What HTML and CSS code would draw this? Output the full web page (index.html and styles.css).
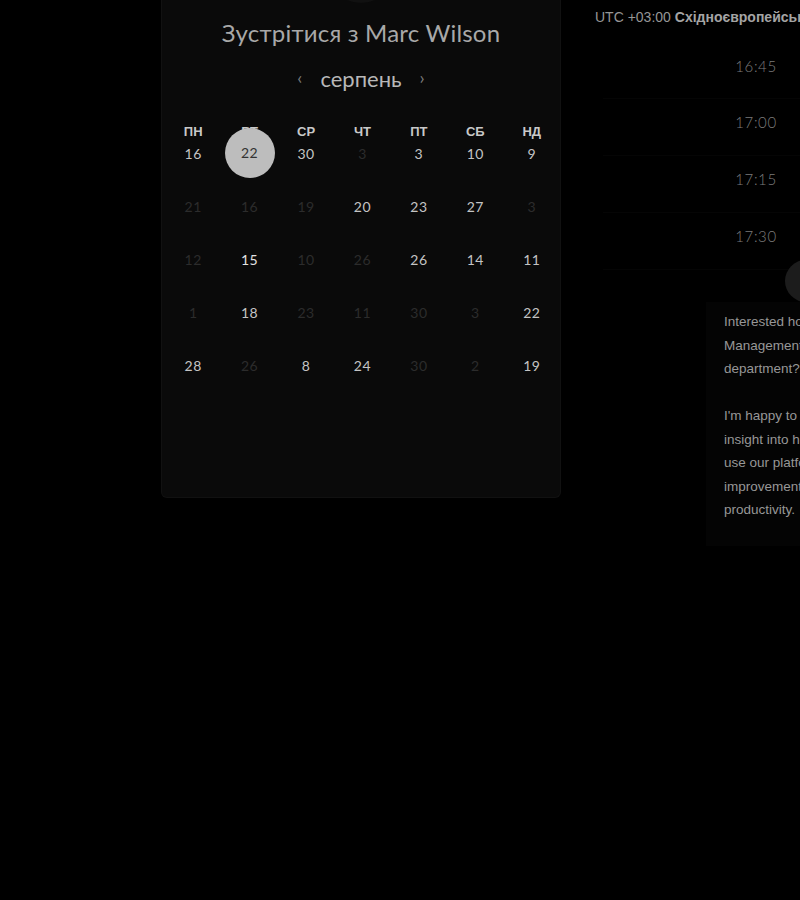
FILE: index.html
```html
<!DOCTYPE html>
<html lang="uk">
  <head>
    <meta charset="UTF-8" />
    <meta name="viewport" content="width=device-width, initial-scale=1.0" />
    <title>Зустрітися з Marc Wilson</title>
    <link rel="stylesheet" href="styles.css">
  </head>
  <body>
    <div class="page">
      <div class="card">
        <div class="avatar"></div>
        <h1 class="title">Зустрітися з Marc Wilson</h1>
        <div class="month-nav">
          <span class="arrow">&#8249;</span>
          <span class="month">серпень</span>
          <span class="arrow">&#8250;</span>
        </div>

        <div class="weekdays">
          <span>ПН</span><span>ВТ</span><span>СР</span><span>ЧТ</span><span>ПТ</span><span>СБ</span><span>НД</span>
        </div>

        <div class="days">
          <div class="day">16</div>
          <div class="day"><span class="selected">22</span></div>
          <div class="day">30</div>
          <div class="day off">3</div>
          <div class="day">3</div>
          <div class="day">10</div>
          <div class="day">9</div>

          <div class="day off">21</div>
          <div class="day off">16</div>
          <div class="day off">19</div>
          <div class="day">20</div>
          <div class="day">23</div>
          <div class="day">27</div>
          <div class="day off">3</div>

          <div class="day off">12</div>
          <div class="day strong">15</div>
          <div class="day off">10</div>
          <div class="day off">26</div>
          <div class="day">26</div>
          <div class="day">14</div>
          <div class="day">11</div>

          <div class="day off">1</div>
          <div class="day">18</div>
          <div class="day off">23</div>
          <div class="day off">11</div>
          <div class="day off">30</div>
          <div class="day off">3</div>
          <div class="day">22</div>

          <div class="day">28</div>
          <div class="day off">26</div>
          <div class="day">8</div>
          <div class="day">24</div>
          <div class="day off">30</div>
          <div class="day off">2</div>
          <div class="day">19</div>
        </div>
      </div>

      <div class="side">
        <p class="timezone">UTC +03:00 <b>Східноєвропейський час</b></p>

        <div class="slots">
          <div class="slot">16:45</div>
          <div class="slot">17:00</div>
          <div class="slot">17:15</div>
          <div class="slot">17:30</div>
        </div>

        <div class="host-avatar"></div>

        <div class="note">
          <p>Interested how our Time<br>Management tool can help your<br>department?</p>
          <p>I'm happy to give you an<br>insight into how teams<br>use our platform to drive<br>improvements in<br>productivity.</p>
        </div>
      </div>
    </div>
  </body>
</html>
```

FILE: styles.css
```css
body {
  margin: 0;
  background-color: #000;
  font-family: Lato, "Noto Sans", sans-serif;
  overflow: hidden;
  height: 900px;
}

.page {
  display: flex;
  align-items: flex-start;
  padding-left: 161px;
}

/* calendar card */
.card {
  width: 398px;
  flex-shrink: 0;
  margin-top: -70px;
  padding: 0 0 105px 0;
  background-color: #0a0a0a;
  border: 1px solid #111;
  border-top: none;
  border-radius: 0 0 6px 6px;
}

.avatar {
  width: 70px;
  height: 73px;
  margin: 0 auto;
  border-radius: 50%;
  background-color: #111;
}

.title {
  margin: 15px 0 0;
  font-size: 24px;
  line-height: 30px;
  font-weight: 400;
  color: #a8a8a8;
  text-align: center;
  letter-spacing: 0.2px;
}

.month-nav {
  display: flex;
  justify-content: center;
  align-items: center;
  gap: 18px;
  margin-top: 15px;
  height: 30px;
}

.month {
  font-size: 22px;
  color: #b8b8b8;
}

.arrow {
  font-size: 18px;
  color: #7a7a7a;
  margin-top: -3px;
}

.weekdays {
  display: grid;
  grid-template-columns: repeat(7, 1fr);
  margin-top: 31px;
  padding-left: 3px;
  font-family: "Liberation Sans", Arial, sans-serif;
  font-size: 13px;
  font-weight: bold;
  line-height: 16px;
  color: #c8c8c8;
  text-align: center;
}

.days {
  display: grid;
  grid-template-columns: repeat(7, 1fr);
  grid-auto-rows: 53px;
  margin-top: -13px;
  padding-left: 3px;
}

.day {
  display: flex;
  align-items: center;
  justify-content: center;
  font-size: 14px;
  color: #c4c4c4;
  letter-spacing: 0.5px;
}

.day.off {
  color: #2c2c2c;
}

.day.strong {
  color: #e2e2e2;
}

.selected {
  position: relative;
  display: flex;
  align-items: center;
  justify-content: center;
  width: 50px;
  height: 50px;
  margin-top: -2px;
  border-radius: 50%;
  background-color: #bdbdbd;
  color: #333;
}

/* right column */
.side {
  margin-left: 19px;
  width: 220px;
  flex-shrink: 0;
}

.timezone {
  margin: 8px 0 0 15px;
  font-family: "Liberation Sans", Arial, sans-serif;
  font-size: 14px;
  line-height: 18px;
  color: #969696;
  white-space: nowrap;
}

.timezone b {
  color: #a4a4a4;
}

.slots {
  margin: 17px 0 0 23px;
  width: 306px;
}

.slot {
  height: 56px;
  padding-top: 14px;
  box-sizing: border-box;
  border-bottom: 1px solid #050505;
  font-size: 15px;
  font-weight: 300;
  line-height: 18px;
  color: #7c7c7c;
  text-align: center;
  letter-spacing: 0.6px;
}

.slot + .slot {
  height: 57px;
}

.host-avatar {
  width: 42px;
  height: 42px;
  margin: -10px 0 0 205px;
  border-radius: 50%;
  background-color: #1c1c1c;
}

.note {
  margin: 0 0 0 126px;
  width: 260px;
  padding: 8px 18px 24px;
  background-color: #040404;
  font-family: "Liberation Sans", Arial, sans-serif;
  font-size: 13.5px;
  line-height: 23.5px;
  color: #979797;
}

.note p {
  margin: 0 0 23.5px;
  white-space: nowrap;
}

.note p:last-child {
  margin-bottom: 0;
}
```
